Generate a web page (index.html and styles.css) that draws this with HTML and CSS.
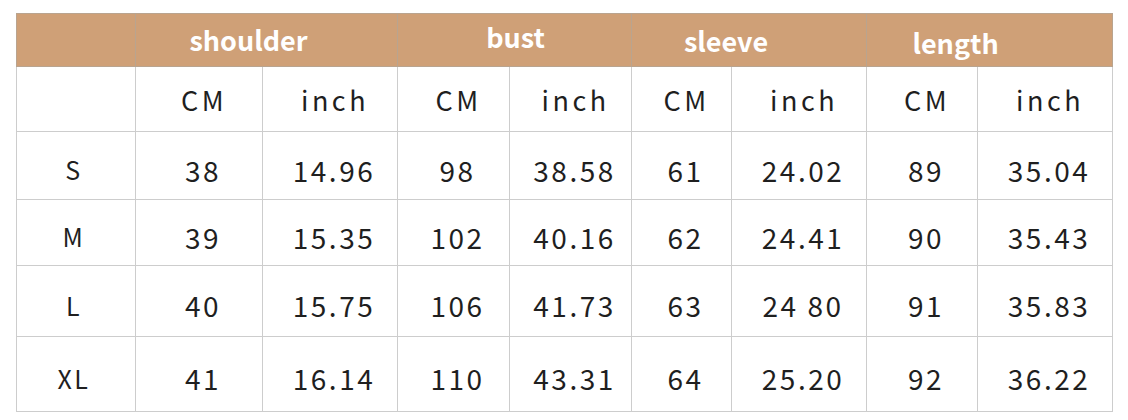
FILE: index.html
```html
<!DOCTYPE html>
<html>
<head>
<meta charset="utf-8">
<link rel="stylesheet" href="styles.css">
</head>
<body>
<table class="size-table">
  <colgroup>
    <col class="c-size">
    <col class="c1"><col class="c2">
    <col class="c3"><col class="c4">
    <col class="c5"><col class="c6">
    <col class="c7"><col class="c8">
  </colgroup>
  <thead>
    <tr class="head-row">
      <th></th>
      <th colspan="2" class="h-shoulder">shoulder</th>
      <th colspan="2" class="h-bust">bust</th>
      <th colspan="2" class="h-sleeve">sleeve</th>
      <th colspan="2" class="h-length">length</th>
    </tr>
  </thead>
  <tbody>
    <tr class="r-units">
      <td></td>
      <td>CM</td><td>inch</td>
      <td>CM</td><td>inch</td>
      <td>CM</td><td>inch</td>
      <td>CM</td><td>inch</td>
    </tr>
    <tr class="r-s">
      <td class="size">S</td>
      <td>38</td><td>14.96</td>
      <td>98</td><td>38.58</td>
      <td>61</td><td>24.02</td>
      <td>89</td><td>35.04</td>
    </tr>
    <tr class="r-m">
      <td class="size">M</td>
      <td>39</td><td>15.35</td>
      <td>102</td><td>40.16</td>
      <td>62</td><td>24.41</td>
      <td>90</td><td>35.43</td>
    </tr>
    <tr class="r-l">
      <td class="size">L</td>
      <td>40</td><td>15.75</td>
      <td>106</td><td>41.73</td>
      <td>63</td><td>24 80</td>
      <td>91</td><td>35.83</td>
    </tr>
    <tr class="r-xl">
      <td class="size">XL</td>
      <td>41</td><td>16.14</td>
      <td>110</td><td>43.31</td>
      <td>64</td><td>25.20</td>
      <td>92</td><td>36.22</td>
    </tr>
  </tbody>
</table>
</body>
</html>
```

FILE: styles.css
```css
html, body {
  margin: 0;
  padding: 0;
  background: #ffffff;
}

body {
  padding: 13px 0 0 16px;
}

.size-table {
  border-collapse: collapse;
  table-layout: fixed;
  width: 1096px;
  border: 1px solid #b4b4b4;
  font-family: "Noto Sans CJK SC", "Noto Sans", sans-serif;
  font-weight: 400;
  color: #1f1f1f;
}

.c-size { width: 119px; }
.c1 { width: 127px; }
.c2 { width: 135px; }
.c3 { width: 112px; }
.c4 { width: 122px; }
.c5 { width: 100px; }
.c6 { width: 135px; }
.c7 { width: 111px; }
.c8 { width: 135px; }

.head-row { height: 53px; }

.head-row th {
  padding: 0;
  background: #cfa077;
  color: #ffffff;
  font-weight: 700;
  font-size: 27px;
  text-align: center;
  border: 1px solid #b9a48f;
  line-height: 1;
  vertical-align: middle;
}

.head-row th.h-shoulder { padding: 0 36px 2px 0; }
.head-row th.h-bust { padding: 0 0 8px 2px; }
.head-row th.h-sleeve { padding: 0 46px 0 0; }
.head-row th.h-length { padding: 4px 68px 0 0; }

td {
  border: 1px solid #cdcdcd;
  text-align: center;
  vertical-align: middle;
  font-size: 28px;
  letter-spacing: 2.5px;
  padding: 8px 0 0 8px;
  line-height: 1;
}

.r-units { height: 65px; }
.r-s { height: 68px; }
.r-m { height: 66px; }
.r-l { height: 71px; }
.r-xl { height: 75px; }

.r-units td {
  font-size: 27px;
  letter-spacing: 3.5px;
  padding: 0 0 0 10px;
}

td.size {
  padding-left: 0;
  padding-right: 4px;
  font-size: 25px;
}
```
